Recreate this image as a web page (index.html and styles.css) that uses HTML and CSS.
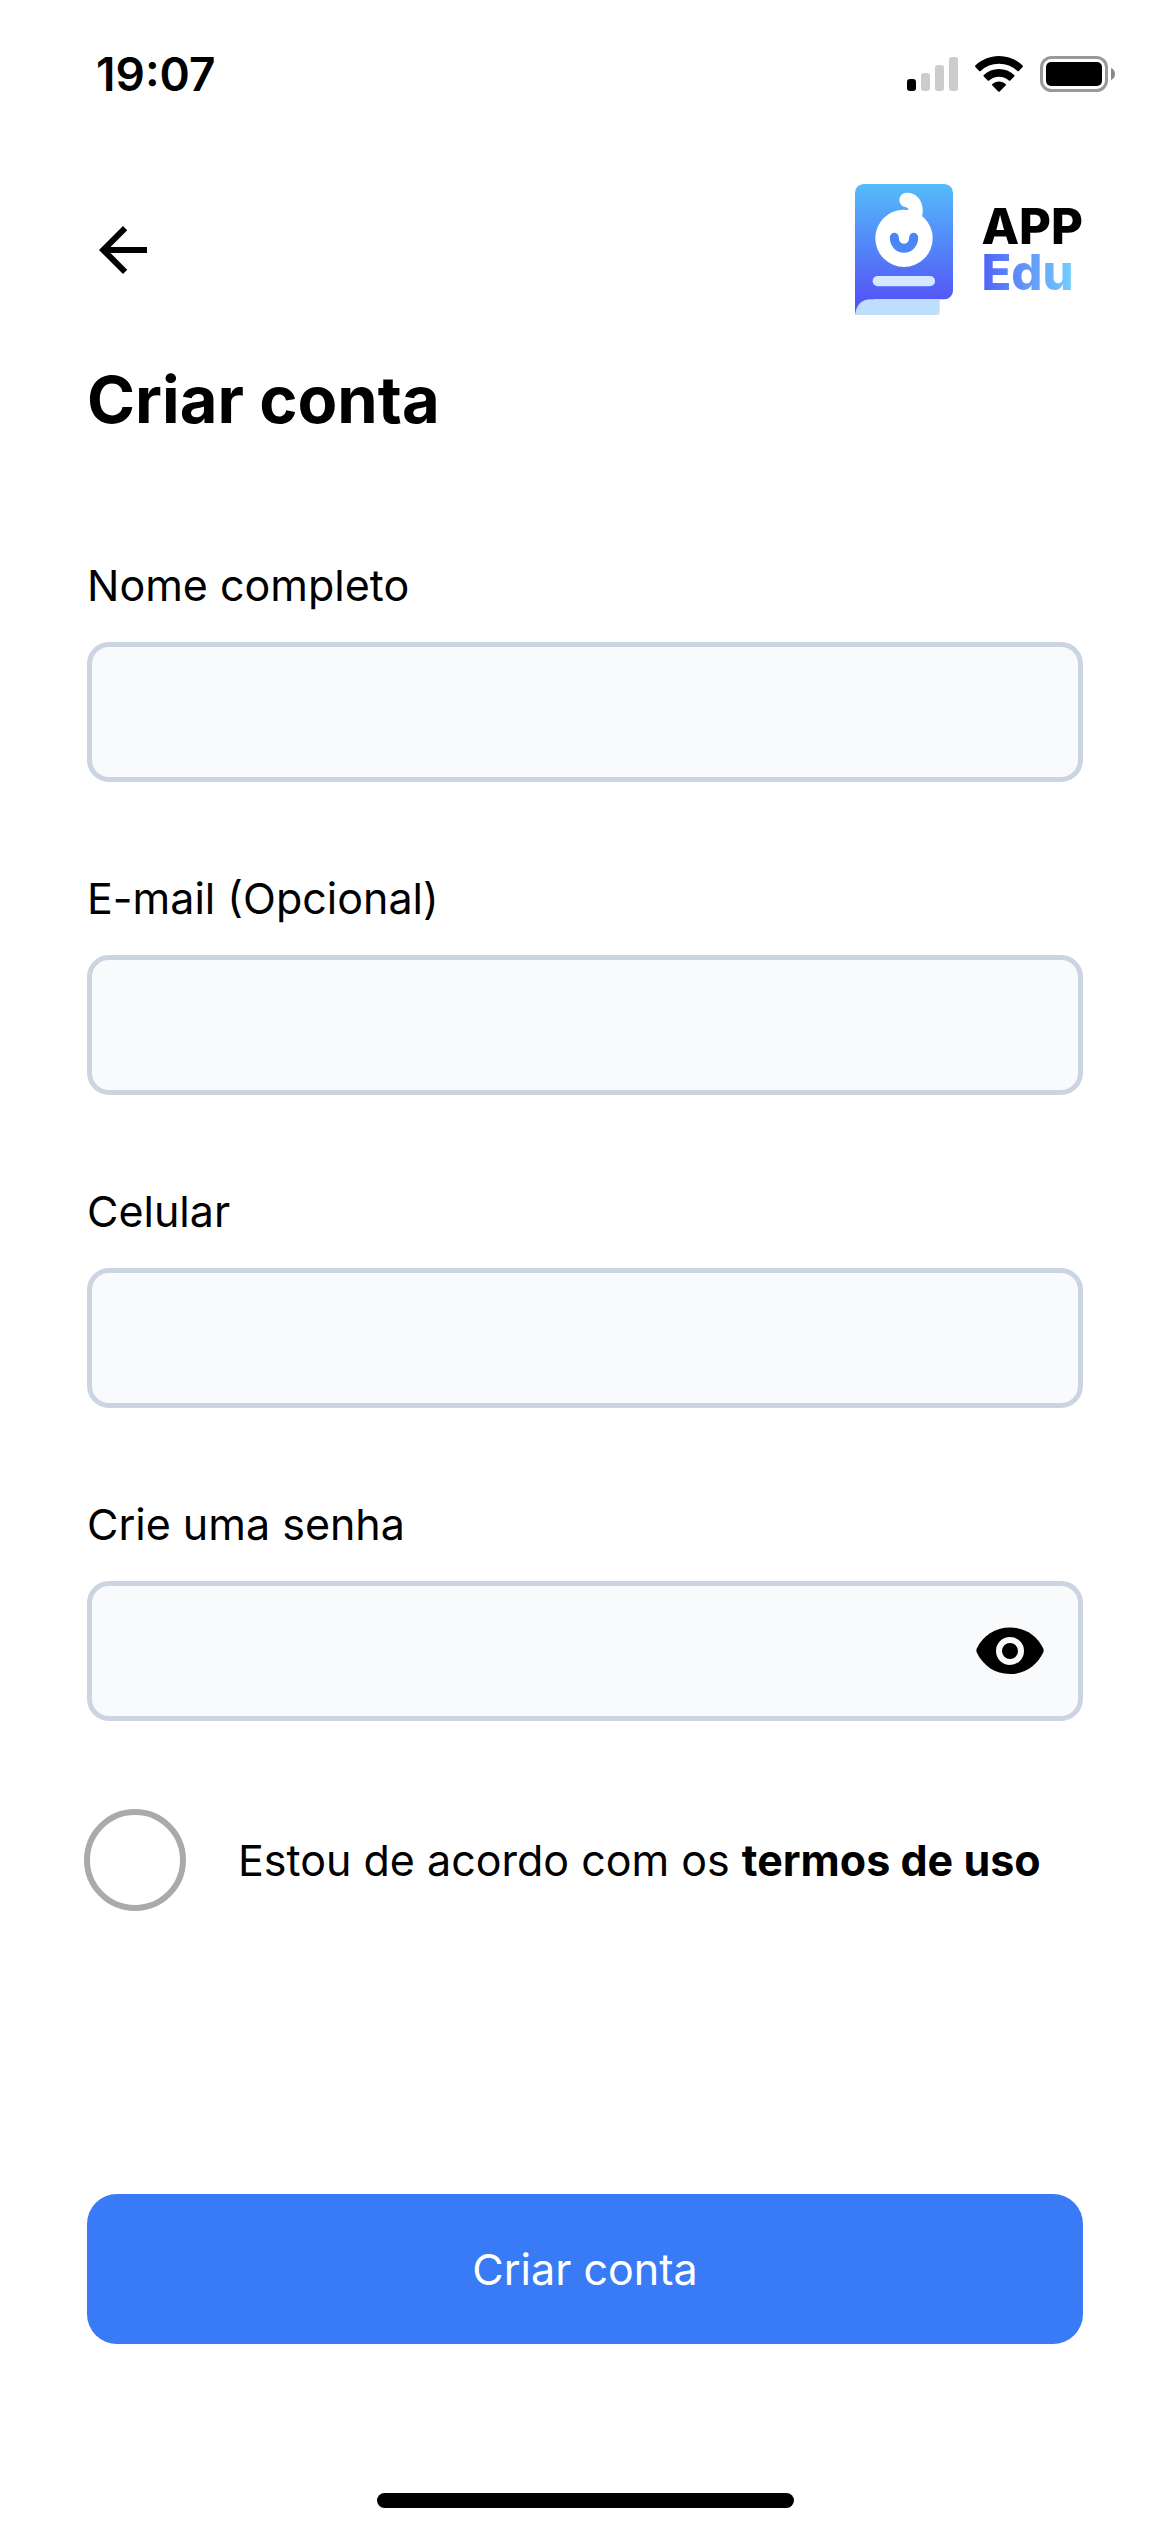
FILE: index.html
```html
<!DOCTYPE html>
<html lang="pt-BR">
<head>
  <meta charset="UTF-8" />
  <meta name="viewport" content="width=device-width, initial-scale=1.0" />
  <title>APP Edu - Criar conta</title>
  <link rel="stylesheet" href="styles.css">
</head>
<body>
  <!-- Barra de status -->
  <div class="status-bar">
    <span class="time">19:07</span>
    <div class="status-icons">
      <svg width="51" height="36" viewBox="0 0 51 36" aria-hidden="true">
        <rect x="0" y="23" width="9" height="12" rx="3" />
        <g fill="#ccc">
          <rect x="14" y="17" width="9" height="18" rx="3" />
          <rect x="28" y="9" width="9" height="26" rx="3" />
          <rect x="42" y="1" width="9" height="34" rx="3" />
        </g>
      </svg>
      <svg width="48" height="36" viewBox="0 0 48 36" aria-hidden="true">
        <path d="M24 0C14.800 0 6.500 3.600.4 9.400a1 1 0 0 0 0 1.500l3.700 4a1 1 0 0 0 1.500 0A27 27 0 0 1 24 7.700a27 27 0 0 1 18.400 7.200 1 1 0 0 0 1.500 0l3.700-4a1 1 0 0 0 0-1.500C41.500 3.600 33.200 0 24 0Z" />
        <path d="M24 13c-5.900 0-11.200 2.300-15.200 6a1 1 0 0 0 0 1.500l3.900 4a1 1 0 0 0 1.400 0A14.500 14.500 0 0 1 24 20.700c3.800 0 7.300 1.400 9.900 3.800a1 1 0 0 0 1.400 0l3.900-4a1 1 0 0 0 0-1.500c-4-3.700-9.300-6-15.200-6Z" />
        <path d="M24 25.500c-2.500 0-4.800.9-6.600 2.400a1 1 0 0 0 0 1.500l5.900 6.100a1 1 0 0 0 1.400 0l5.900-6.100a1 1 0 0 0 0-1.500c-1.800-1.500-4.100-2.400-6.600-2.400Z" />
      </svg>
      <svg width="75" height="36" viewBox="0 0 75 36" aria-hidden="true">
        <rect x="1.500" y="1.500" width="65" height="33" rx="10" fill="none" stroke="#999" stroke-width="3" />
        <rect x="6" y="6" width="56" height="24" rx="5" />
        <path d="M71 12c2.500 1 4 3.300 4 6s-1.500 5-4 6Z" fill="#888" />
      </svg>
    </div>
  </div>

  <main>
    <header>
      <button type="button" class="back" aria-label="Voltar">
        <svg width="72" height="72" viewBox="0 0 24 24" aria-hidden="true">
          <path d="M20 11H7.830l5.590-5.590L12 4l-8 8 8 8 1.410-1.410L7.830 13H20v-2z" />
        </svg>
      </button>
      <div class="brand">
        <svg width="98" height="131" viewBox="0 0 294 393" aria-hidden="true">
          <defs>
            <linearGradient id="book" gradientUnits="userSpaceOnUse" x1="0" y1="0" x2="0" y2="346">
              <stop offset="0" stop-color="#54bcfb" />
              <stop offset="1" stop-color="#5357f6" />
            </linearGradient>
          </defs>
          <path d="M26 0H268a26 26 0 0 1 26 26V320a26 26 0 0 1-26 26H60L0 393V26A26 26 0 0 1 26 0Z" fill="url(#book)" />
          <path d="M0 393C4 362 20 346 47 346H254V385a8 8 0 0 1-8 8Z" fill="#bfdefb" />
          <circle cx="147" cy="163" r="86" fill="#fff" />
          <path d="M157 26a22 22 0 0 0-4 44C160 71 163 79 157 84L201 100C211 60 191 27 157 26Z" fill="#fff" />
          <path d="M118 160C118 204 176 204 176 160" fill="none" stroke="#4a85f9" stroke-width="27" stroke-linecap="round" />
          <rect x="53" y="276" width="187" height="31" rx="15" fill="#d4e9fe" />
        </svg>
        <div class="brand-name">
          <span>APP</span>
          <span class="edu">Edu</span>
        </div>
      </div>
    </header>

    <h1>Criar conta</h1>

    <form>
      <div class="field">
        <label for="nome">Nome completo</label>
        <input type="text" id="nome" />
      </div>
      <div class="field">
        <label for="email">E-mail (Opcional)</label>
        <input type="email" id="email" />
      </div>
      <div class="field">
        <label for="celular">Celular</label>
        <input type="tel" id="celular" />
      </div>
      <div class="field">
        <label for="senha">Crie uma senha</label>
        <div class="password">
          <input type="password" id="senha" />
          <button type="button" class="toggle" aria-label="Mostrar senha" onclick="toggleSenha()">
            <svg width="68" height="48" viewBox="0 0 68 48" aria-hidden="true">
              <path d="M34 .5C19 .5 7 8.500.8 21.500a5 5 0 0 0 0 4C7 38.500 19 47 34 47s27-8.500 33.200-21.500a5 5 0 0 0 0-4C61 8.500 49 .5 34 .5Z" />
              <circle cx="34" cy="24" r="11" fill="none" stroke="#f9fafc" stroke-width="6" />
            </svg>
          </button>
        </div>
      </div>

      <div class="terms">
        <input type="checkbox" id="termos" />
        <label for="termos">Estou de acordo com os <a href="#">termos de uso</a></label>
      </div>

      <button type="submit" class="submit">Criar conta</button>
    </form>
  </main>

  <div class="home-indicator"></div>

  <script>
    // mostra ou esconde a senha
    function toggleSenha() {
      const senha = document.getElementById("senha");
      senha.type = senha.type === "password" ? "text" : "password";
    }
  </script>
</body>
</html>
```
FILE: styles.css
```css
* {
  box-sizing: border-box;
}
body {
  font-family: Inter, sans-serif;
  font-size: 43px;
  line-height: 56px;
  font-weight: 400;
  margin: 0;
  min-height: 100vh;
  display: flex;
  flex-direction: column;
  background-color: #fff;
  color: #000;
}
svg {
  display: block;
}
button {
  border: none;
  padding: 0;
  background: none;
  font: inherit;
  cursor: pointer;
}

/* status */
.status-bar {
  display: flex;
  justify-content: space-between;
  align-items: center;
  padding: 46px 55px 0 96px;
}
.time {
  font-size: 46px;
  font-weight: 600;
}
.status-icons {
  display: flex;
  gap: 17px;
}

main {
  flex: 1;
  display: flex;
  flex-direction: column;
  padding: 82px 87px 0;
}
header {
  display: flex;
  justify-content: space-between;
  align-items: center;
}
.brand {
  display: flex;
  align-items: center;
  gap: 28px;
}
.brand-name {
  display: flex;
  flex-direction: column;
  align-items: flex-start;
  font-size: 49px;
  line-height: 46px;
  font-weight: 800;
}
.edu {
  background: linear-gradient(90deg, #5260f8, #74d0fd);
  -webkit-background-clip: text;
  background-clip: text;
  color: transparent;
}
h1 {
  margin: 45px 0 117px;
  font-size: 65px;
  line-height: 80px;
  font-weight: 700;
}

/* formulário */
form {
  flex: 1;
  display: flex;
  flex-direction: column;
}
.field {
  display: flex;
  flex-direction: column;
  gap: 29px;
  margin-bottom: 88px;
}
.field input {
  width: 100%;
  height: 140px;
  padding: 0 36px;
  border: 5px solid #cbd5e1;
  border-radius: 22px;
  background-color: #f9fafc;
  font: inherit;
}
.password {
  position: relative;
  display: flex;
}
.password input {
  padding-right: 130px;
}
.toggle {
  position: absolute;
  top: 0;
  bottom: 0;
  right: 39px;
}
.terms {
  display: flex;
  align-items: center;
  gap: 52px;
  margin-left: -3px;
}
.terms input {
  appearance: none;
  flex: none;
  width: 102px;
  height: 102px;
  margin: 0;
  border: 6px solid #aaa;
  border-radius: 50%;
}
.terms input:checked {
  background-color: #397bf6;
}
.terms a {
  color: inherit;
  font-weight: 700;
  text-decoration: none;
}
.submit {
  height: 150px;
  margin-top: auto;
  border-radius: 30px;
  background-color: #397bf6;
  color: #fff;
}

.home-indicator {
  width: 417px;
  height: 15px;
  margin: 149px auto 24px;
  border-radius: 8px;
  background-color: #000;
}
```
